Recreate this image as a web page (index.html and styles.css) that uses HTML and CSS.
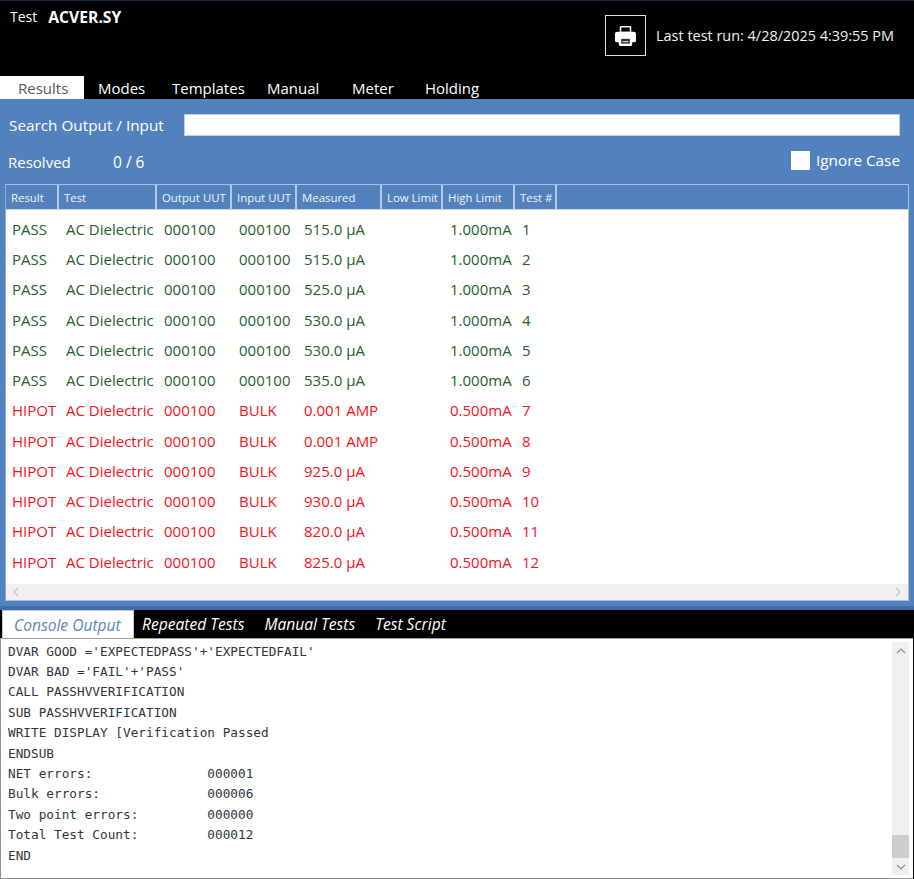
FILE: index.html
```html
<!DOCTYPE html>
<html lang="en">
<head>
    <meta charset="UTF-8">
    <title>Test ACVER.SY</title>
    <link rel="stylesheet" href="styles.css">
</head>
<body>
    <div class="window">
        <header class="top">
            <div class="title"><span>Test</span><b>ACVER.SY</b></div>
            <div class="run-info">
                <button class="print-btn" aria-label="Print">
                    <svg width="23" height="23" viewBox="0 0 24 24">
                        <path fill="#fff" d="M6 3.5a1.5 1.5 0 0 1 1.5-1.5h9A1.5 1.5 0 0 1 18 3.5V8H6z"/>
                        <path fill="#000" d="M7.6 3.6h8.800V8H7.600z"/>
                        <path fill="#fff" d="M3.500 8h17A2.500 2.500 0 0 1 23 10.500v7a1.500 1.500 0 0 1-1.500 1.500H19v2.500a1.500 1.500 0 0 1-1.500 1.500h-11A1.500 1.500 0 0 1 5 21.500V19H2.500A1.500 1.500 0 0 1 1 17.500v-7A2.500 2.500 0 0 1 3.500 8z"/>
                        <path fill="#333" d="M7.500 15.500h9V20.500h-9z"/>
                        <path fill="#fff" d="M9 18h6v1H9z"/>
                    </svg>
                </button>
                <span>Last test run: 4/28/2025 4:39:55 PM</span>
            </div>
        </header>

        <nav class="tabs">
            <a class="tab active tab-results">Results</a>
            <a class="tab tab-modes">Modes</a>
            <a class="tab tab-templates">Templates</a>
            <a class="tab tab-manual">Manual</a>
            <a class="tab tab-meter">Meter</a>
            <a class="tab">Holding</a>
        </nav>

        <section class="results">
            <div class="search-row">
                <label>Search Output / Input</label>
                <input type="text" class="search-input">
            </div>
            <div class="status-row">
                <span class="resolved">Resolved</span>
                <span class="count">0 / 6</span>
                <label class="ignore"><span class="check"></span>Ignore Case</label>
            </div>
            <div class="grid-box">
                <table class="grid">
                    <thead>
                        <tr>
                            <th class="c-result">Result</th>
                            <th class="c-test">Test</th>
                            <th class="c-out">Output UUT</th>
                            <th class="c-in">Input UUT</th>
                            <th class="c-meas">Measured</th>
                            <th class="c-low">Low Limit</th>
                            <th class="c-high">High Limit</th>
                            <th class="c-num">Test #</th>
                            <th class="c-rest"></th>
                        </tr>
                    </thead>
                    <tbody>
                        <tr class="pass"><td>PASS</td><td>AC Dielectric</td><td>000100</td><td>000100</td><td>515.0 µA</td><td></td><td>1.000mA</td><td>1</td><td></td></tr>
                        <tr class="pass"><td>PASS</td><td>AC Dielectric</td><td>000100</td><td>000100</td><td>515.0 µA</td><td></td><td>1.000mA</td><td>2</td><td></td></tr>
                        <tr class="pass"><td>PASS</td><td>AC Dielectric</td><td>000100</td><td>000100</td><td>525.0 µA</td><td></td><td>1.000mA</td><td>3</td><td></td></tr>
                        <tr class="pass"><td>PASS</td><td>AC Dielectric</td><td>000100</td><td>000100</td><td>530.0 µA</td><td></td><td>1.000mA</td><td>4</td><td></td></tr>
                        <tr class="pass"><td>PASS</td><td>AC Dielectric</td><td>000100</td><td>000100</td><td>530.0 µA</td><td></td><td>1.000mA</td><td>5</td><td></td></tr>
                        <tr class="pass"><td>PASS</td><td>AC Dielectric</td><td>000100</td><td>000100</td><td>535.0 µA</td><td></td><td>1.000mA</td><td>6</td><td></td></tr>
                        <tr class="fail"><td>HIPOT</td><td>AC Dielectric</td><td>000100</td><td>BULK</td><td>0.001 AMP</td><td></td><td>0.500mA</td><td>7</td><td></td></tr>
                        <tr class="fail"><td>HIPOT</td><td>AC Dielectric</td><td>000100</td><td>BULK</td><td>0.001 AMP</td><td></td><td>0.500mA</td><td>8</td><td></td></tr>
                        <tr class="fail"><td>HIPOT</td><td>AC Dielectric</td><td>000100</td><td>BULK</td><td>925.0 µA</td><td></td><td>0.500mA</td><td>9</td><td></td></tr>
                        <tr class="fail"><td>HIPOT</td><td>AC Dielectric</td><td>000100</td><td>BULK</td><td>930.0 µA</td><td></td><td>0.500mA</td><td>10</td><td></td></tr>
                        <tr class="fail"><td>HIPOT</td><td>AC Dielectric</td><td>000100</td><td>BULK</td><td>820.0 µA</td><td></td><td>0.500mA</td><td>11</td><td></td></tr>
                        <tr class="fail"><td>HIPOT</td><td>AC Dielectric</td><td>000100</td><td>BULK</td><td>825.0 µA</td><td></td><td>0.500mA</td><td>12</td><td></td></tr>
                    </tbody>
                </table>
                <div class="hscroll">
                    <svg width="8" height="10" viewBox="0 0 8 10"><path d="M6 1 2 5l4 4" fill="none" stroke="#c4c4c4" stroke-width="1.200"/></svg>
                    <svg width="8" height="10" viewBox="0 0 8 10"><path d="M2 1l4 4-4 4" fill="none" stroke="#c4c4c4" stroke-width="1.200"/></svg>
                </div>
            </div>
        </section>

        <nav class="sub-tabs">
            <a class="sub-tab active">Console Output</a>
            <a class="sub-tab">Repeated Tests</a>
            <a class="sub-tab">Manual Tests</a>
            <a class="sub-tab">Test Script</a>
        </nav>

        <section class="console">
            <pre class="console-text">DVAR GOOD ='EXPECTEDPASS'+'EXPECTEDFAIL'
DVAR BAD ='FAIL'+'PASS'
CALL PASSHVVERIFICATION
SUB PASSHVVERIFICATION
WRITE DISPLAY [Verification Passed
ENDSUB
NET errors:               000001
Bulk errors:              000006
Two point errors:         000000
Total Test Count:         000012
END</pre>
            <div class="vscroll">
                <svg width="10" height="8" viewBox="0 0 10 8"><path d="M1 6l4-4 4 4" fill="none" stroke="#8c8c8c" stroke-width="1.200"/></svg>
                <div class="vtrack"><div class="vthumb"></div></div>
                <svg width="10" height="8" viewBox="0 0 10 8"><path d="M1 2l4 4 4-4" fill="none" stroke="#8c8c8c" stroke-width="1.200"/></svg>
            </div>
        </section>
    </div>
</body>
</html>
```

FILE: styles.css
```css
html, body {
    margin: 0;
    padding: 0;
    background: #000;
}

.window {
    width: 914px;
    height: 879px;
    display: flex;
    flex-direction: column;
    overflow: hidden;
    font-family: "Open Sans", "Noto Sans", sans-serif;
    color: #fff;
    background: #000;
}

/* top bar */
.top {
    height: 75px;
    display: flex;
    justify-content: space-between;
    border-top: 1px solid #16263c;
}

.title {
    display: flex;
    gap: 11px;
    padding: 6px 0 0 10px;
    font-size: 14px;
    line-height: 20px;
}

.title b {
    font-size: 15.700px;
    font-weight: 700;
}

.run-info {
    display: flex;
    align-items: center;
    gap: 10px;
    height: 41px;
    padding: 14px 20px 0 0;
    font-size: 14.450px;
    color: #f2f2f2;
}

.print-btn {
    width: 41px;
    height: 41px;
    padding: 0;
    display: flex;
    align-items: center;
    justify-content: center;
    background: #000;
    border: 1px solid #e0e0e0;
}

/* main tabs */
.tabs {
    height: 23px;
    display: flex;
    font-size: 15px;
    line-height: 25px;
}

.tab {
    display: block;
    white-space: nowrap;
}

.tab.active {
    width: 84px;
    height: 25px;
    padding-left: 18px;
    box-sizing: border-box;
    background: #fff;
    color: #555;
}

.tab-modes { width: 88px; padding-left: 14px; box-sizing: border-box; }
.tab-templates { width: 95px; }
.tab-manual { width: 85px; }
.tab-meter { width: 73px; }

/* results panel */
.results {
    height: 507px;
    position: relative;
    background: #5282bd;
    border-bottom: 4px solid #3f6ea8;
    box-sizing: content-box;
}

.search-row {
    display: flex;
    align-items: center;
    height: 24px;
    padding: 14px 14px 0 9px;
    font-size: 15.300px;
}

.search-row label {
    width: 175px;
    white-space: nowrap;
}

.search-input {
    flex: 1;
    height: 22px;
    padding: 0;
    box-sizing: border-box;
    background: #fff;
    border: 1px solid #c5cfdb;
}

.status-row {
    display: flex;
    align-items: center;
    height: 28px;
    margin-top: 11px;
    padding: 0 14px 0 8px;
    font-size: 15px;
}

.resolved {
    width: 105px;
}

.count {
    flex: 1;
    font-size: 15.500px;
}

.ignore {
    display: flex;
    align-items: center;
    gap: 6px;
    margin-top: -4px;
    font-size: 15.300px;
}

.check {
    width: 19px;
    height: 19px;
    background: #fff;
}

.grid-box {
    margin: 8px 5px 0 5px;
    height: 417px;
    display: flex;
    flex-direction: column;
    justify-content: space-between;
    background: #fff;
    border: 1px solid #a9bfdb;
    border-left-color: #8fa9cb;
    box-sizing: border-box;
}

.grid {
    width: 902px;
    table-layout: fixed;
    border-collapse: separate;
    border-spacing: 0;
}

.grid th {
    height: 25px;
    padding: 0 0 0 5px;
    box-sizing: border-box;
    background: #5282bd;
    border-right: 2px solid #b5c8e0;
    border-bottom: 1px solid #c5d4e6;
    font-size: 11.400px;
    font-weight: 400;
    text-align: left;
    color: #f0f4f9;
    white-space: nowrap;
    overflow: hidden;
}

.grid th.c-rest {
    border-right: none;
}

.c-result { width: 53px; }
.c-test { width: 98px; }
.c-out { width: 75px; }
.c-in { width: 65px; }
.c-meas { width: 85px; }
.c-low { width: 61px; }
.c-high { width: 72px; }
.c-num { width: 42px; }

.grid td {
    height: 30.270px;
    padding: 0 0 0 7px;
    box-sizing: border-box;
    font-size: 15px;
    white-space: nowrap;
}

.grid td:first-child {
    padding-left: 6px;
}

.grid tbody tr:first-child td {
    height: 33.900px;
    padding-top: 3.600px;
}

.grid tr.pass td { color: #26602c; }
.grid tr.fail td { color: #f5121b; }

.hscroll {
    height: 16px;
    display: flex;
    align-items: center;
    justify-content: space-between;
    padding: 0 6px;
    background: #f0f0f0;
}

/* bottom tabs */
.sub-tabs {
    height: 28px;
    display: flex;
    font-size: 15.600px;
    font-style: italic;
    line-height: 29px;
    padding-left: 2px;
}

.sub-tab {
    padding-right: 20px;
    white-space: nowrap;
}

.sub-tab.active {
    width: 132px;
    padding: 0 0 0 11px;
    margin-right: 8px;
    box-sizing: border-box;
    background: #fff;
    color: #5a86c0;
    border: 1px solid #c9c9c9;
    border-bottom: none;
}

/* console */
.console {
    flex: 1;
    display: flex;
    justify-content: space-between;
    margin-right: 1px;
    background: #fff;
    border: 1px solid #8f8f8f;
    border-right: none;
    border-top-color: #a0a0a0;
}

.console-text {
    margin: 0;
    padding: 2.600px 0 0 7px;
    font-family: "DejaVu Sans Mono", monospace;
    font-size: 12.740px;
    line-height: 20.400px;
    color: #2f3640;
}

.vscroll {
    width: 17px;
    display: flex;
    flex-direction: column;
    align-items: center;
    margin: 3px 4px 3px 0;
    background: #f0f0f0;
}

.vscroll svg {
    flex: none;
    margin: 5px 0 4px;
}

.vtrack {
    flex: 1;
    width: 100%;
    position: relative;
}

.vthumb {
    position: absolute;
    left: 0;
    right: 0;
    bottom: 0;
    height: 23px;
    background: #cdcdcd;
}
```
